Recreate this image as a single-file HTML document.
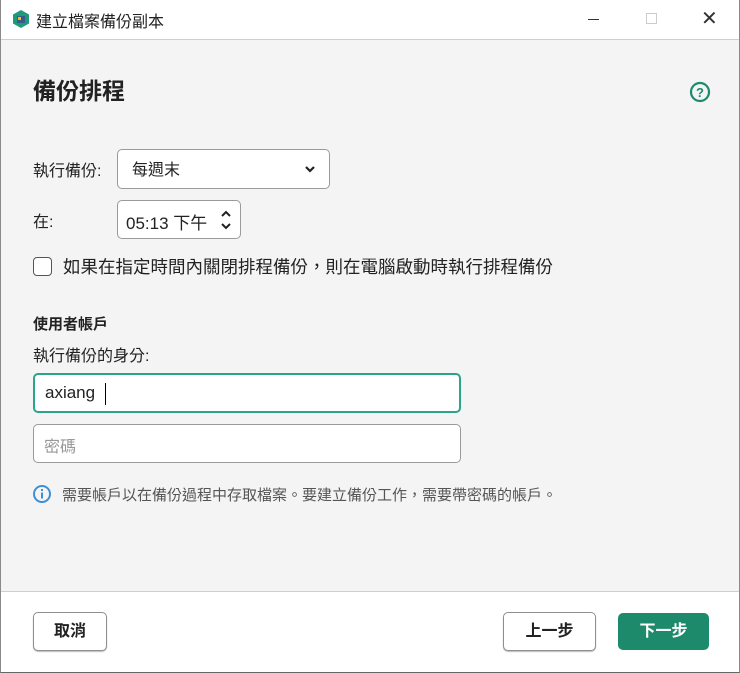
<!DOCTYPE html><html><head><meta charset="utf-8"><style>
*{box-sizing:border-box;margin:0;padding:0}
body{width:740px;height:673px;overflow:hidden;font-family:"Liberation Sans","Noto Sans CJK TC",sans-serif;color:#222;background:#fff;position:relative}
.a{position:absolute}
#win{position:absolute;left:0;top:0;width:740px;height:673px;border-left:1px solid #8a8a8a;border-right:1px solid #8a8a8a;border-bottom:1px solid #666}
#tb{position:absolute;left:0;top:0;width:100%;height:40px;background:#fff;border-bottom:1px solid #cfcfcf}
#body{position:absolute;left:0;top:40px;width:100%;height:552px;background:#f4f4f4;border-bottom:1px solid #cfcfcf}
.box{position:absolute;border:1px solid #9a9a9a;border-radius:5px;background:#fff}
.btn{position:absolute;border:1px solid #8f8f8f;border-radius:5px;background:#fff;font-size:16px;font-weight:bold;text-align:center;line-height:37px;box-shadow:0 1px 1px #bbb}
</style></head><body><div id="win">
<div id="tb">
<svg class="a" style="left:11px;top:9px" width="18" height="20" viewBox="0 0 18 20"><path d="M9 1L17 5.5V14.5L9 19L1 14.5V5.5Z" fill="#1d9a7a"/><rect x="5" y="7" width="8" height="7" fill="#3a5a8a"/><rect x="6" y="8" width="3" height="3" fill="#f0c020"/></svg>
<div class="a" style="left:35px;top:8px;font-size:16px">建立檔案備份副本</div>
<div class="a" style="left:587px;top:19px;width:11px;height:1px;background:#333"></div>
<div class="a" style="left:645px;top:13px;width:11px;height:11px;border:1px solid #ccc"></div>
<div class="a" style="left:700px;top:6px;font-size:20px;color:#333">✕</div>
</div>
<div id="body">
<div class="a" style="left:32px;top:32px;font-size:23px;font-weight:bold">備份排程</div>
<svg class="a" style="left:688px;top:41px" width="22" height="22" viewBox="0 0 22 22"><circle cx="11" cy="11" r="9" fill="none" stroke="#1e8a6c" stroke-width="2.2"/><text x="11" y="16" text-anchor="middle" font-size="13" font-weight="bold" fill="#1e8a6c" font-family="Liberation Sans">?</text></svg>
<div class="a" style="left:32px;top:117px;font-size:16px">執行備份:</div>
<div class="box" style="left:116px;top:109px;width:213px;height:40px"><span class="a" style="left:14px;top:6px;font-size:16px">每週末</span><svg class="a" style="left:187px;top:15px" width="10" height="8" viewBox="0 0 10 8"><path d="M1 2L5 6L9 2" fill="none" stroke="#222" stroke-width="2.2"/></svg></div>
<div class="a" style="left:32px;top:168px;font-size:16px">在:</div>
<div class="box" style="left:116px;top:160px;width:124px;height:39px"><span class="a" style="left:8px;top:8px;font-size:17px">05:13 下午</span><svg class="a" style="left:102px;top:8px" width="12" height="22" viewBox="0 0 12 22"><path d="M2 7L6 3L10 7M2 15L6 19L10 15" fill="none" stroke="#222" stroke-width="2"/></svg></div>
<div class="a" style="left:32px;top:217px;width:19px;height:19px;border:1.5px solid #555;border-radius:4px;background:#fff"></div>
<div class="a" style="left:62px;top:214px;font-size:17.5px">如果在指定時間內關閉排程備份，則在電腦啟動時執行排程備份</div>
<div class="a" style="left:32px;top:273px;font-size:15px;font-weight:bold">使用者帳戶</div>
<div class="a" style="left:32px;top:302px;font-size:16px">執行備份的身分:</div>
<div class="box" style="left:32px;top:333px;width:428px;height:40px;border:2px solid #2aa58a"><span class="a" style="left:10px;top:8px;font-size:17px">axiang</span><span class="a" style="left:70px;top:8px;width:1px;height:22px;background:#000"></span></div>
<div class="box" style="left:32px;top:384px;width:428px;height:39px"><span class="a" style="left:10px;top:8px;font-size:16px;color:#999">密碼</span></div>
<svg class="a" style="left:31px;top:444px" width="20" height="20" viewBox="0 0 20 20"><circle cx="10" cy="10" r="8" fill="none" stroke="#3f8fd6" stroke-width="2"/><rect x="9" y="8.5" width="2" height="6" fill="#3f8fd6"/><rect x="9" y="5" width="2" height="2" fill="#3f8fd6"/></svg>
<div class="a" style="left:61px;top:444px;font-size:15px;color:#555">需要帳戶以在備份過程中存取檔案。要建立備份工作，需要帶密碼的帳戶。</div>
</div>
<div class="btn" style="left:32px;top:612px;width:74px;height:39px">取消</div>
<div class="btn" style="left:502px;top:612px;width:93px;height:39px">上一步</div>
<div class="btn" style="left:617px;top:613px;width:91px;height:37px;background:#1e8a6c;border-color:#1e8a6c;color:#fff;line-height:35px;box-shadow:none">下一步</div>
</div></body></html>
